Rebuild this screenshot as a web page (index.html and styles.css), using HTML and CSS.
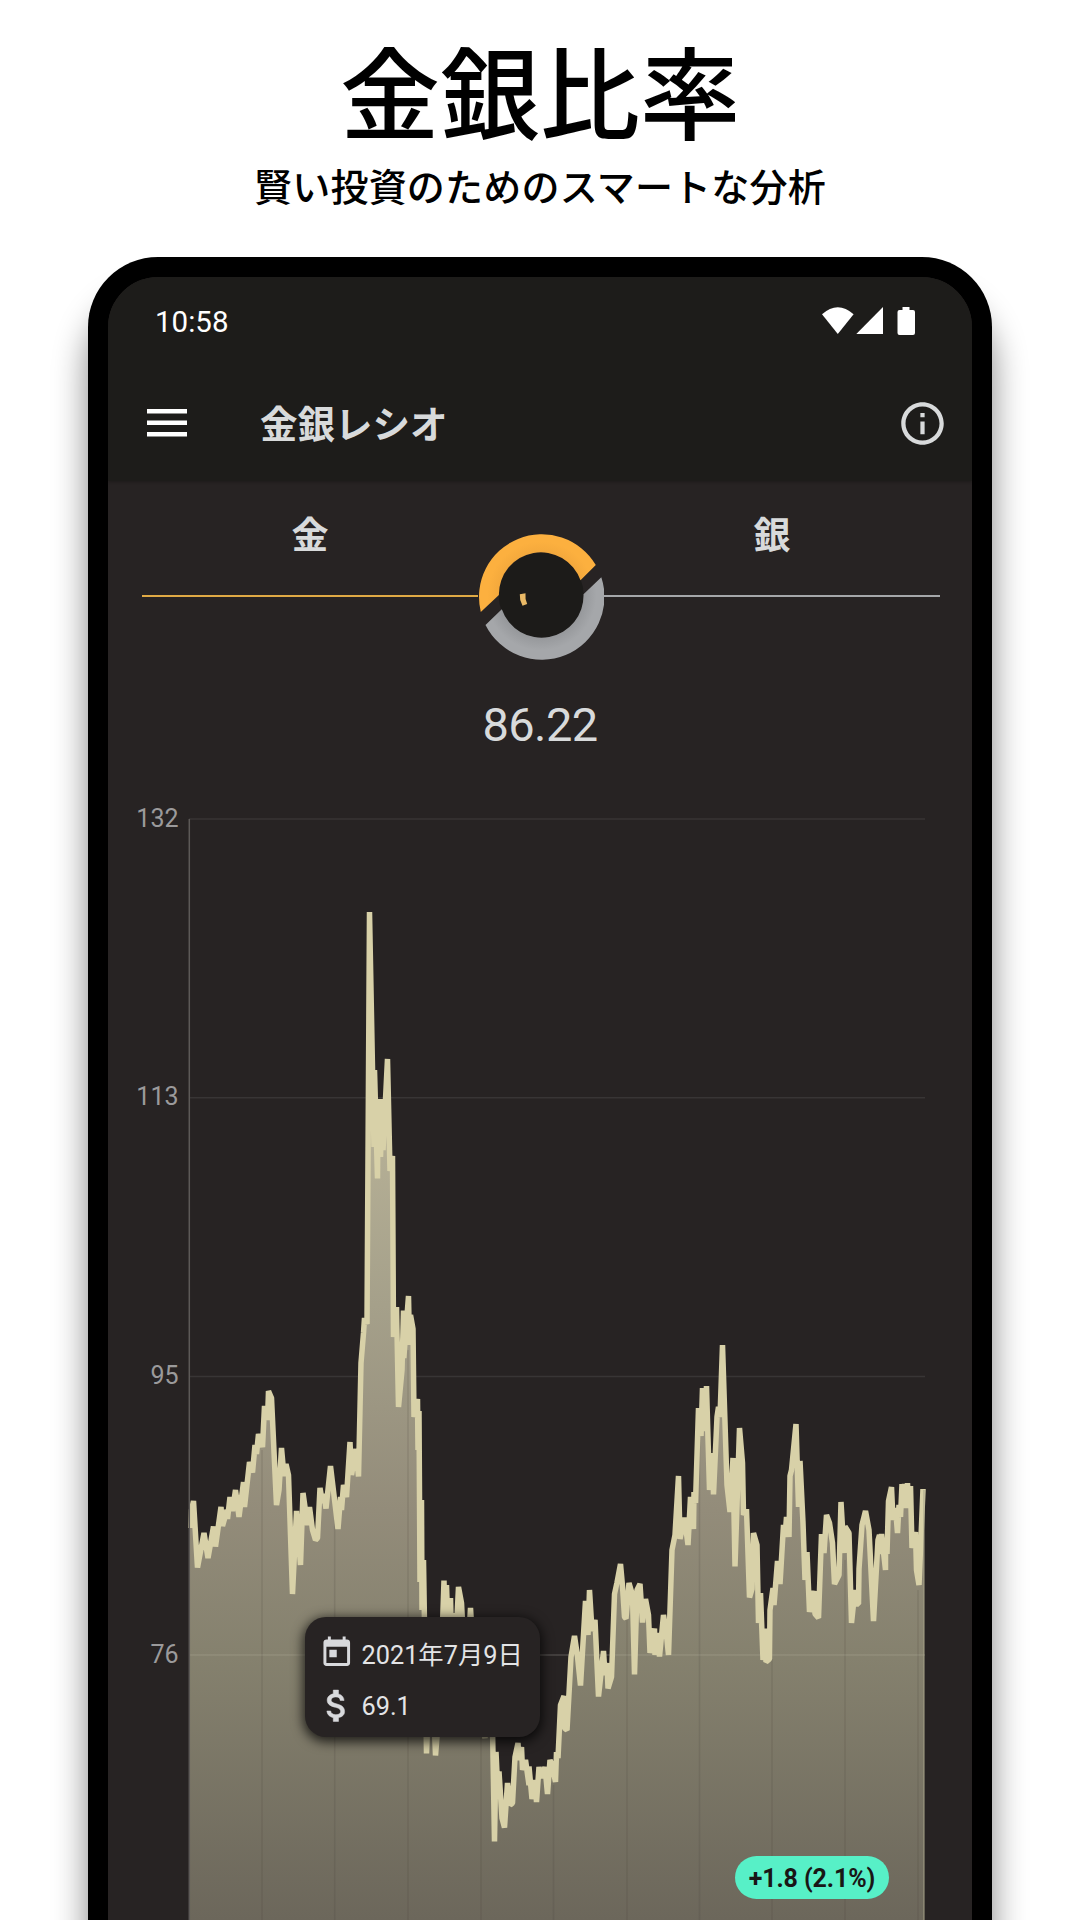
FILE: index.html
```html
<!DOCTYPE html>
<html lang="ja">
<head>
<meta charset="utf-8">
<title>金銀比率</title>
<link rel="stylesheet" href="styles.css">
</head>
<body>
<main class="page">
  <header class="promo">
    <h1 class="promo-title">金銀比率</h1>
    <p class="promo-subtitle">賢い投資のためのスマートな分析</p>
  </header>
  <section class="phone">
    <div class="screen">
      <div class="top">
        <div class="status">
          <span class="time">10:58</span>
          <svg class="status-icons" viewBox="0 0 94 29" aria-hidden="true">
            <path d="M0 7.3Q15.8-6.8 31.6 7.3L15.8 27Z"/>
            <path d="M34.3 27L61 0V27Z"/>
            <path d="M80.500 0h7v3h3.500q2 0 2 2v21q0 2-2 2h-13.500q-2 0-2-2v-21q0-2 2-2h3z"/>
          </svg>
        </div>
        <div class="toolbar">
          <svg class="menu" viewBox="0 0 40 28"><path d="M0 0h40v4.500H0zM0 11.500h40v4.500H0zM0 23h40v4.500H0z"/></svg>
          <h2 class="toolbar-title">金銀レシオ</h2>
          <svg class="info" viewBox="0 0 24 24"><path d="M11 7h2v2h-2zm0 4h2v6h-2zm1-9C6.480 2 2 6.480 2 12s4.480 10 10 10 10-4.480 10-10S17.520 2 12 2zm0 18c-4.410 0-8-3.590-8-8s3.590-8 8-8 8 3.590 8 8-3.590 8-8 8z"/></svg>
        </div>
      </div>
      <div class="pair">
        <div class="metal gold">金</div>
        <svg class="ring" viewBox="477.500 532 126 128">
          <defs>
            <radialGradient id="g1" gradientUnits="userSpaceOnUse" cx="540.500" cy="595" r="63"><stop offset=".66" stop-color="#f3a83c"/><stop offset=".85" stop-color="#fcb03f"/></radialGradient>
            <radialGradient id="g2" gradientUnits="userSpaceOnUse" cx="540.500" cy="595" r="63"><stop offset=".66" stop-color="#95979a"/><stop offset=".88" stop-color="#a5a7aa"/></radialGradient>
          </defs>
          <circle cx="540.700" cy="595.300" r="42.500" fill="#1c1b19"/>
          <path fill="url(#g1)" d="M480.300 612A62.800 62.800 0 0 1 595.300 565L580 580.300A42 42 0 0 0 498.400 595Z"/>
          <path fill="url(#g2)" d="M600.800 577.200A62.800 62.800 0 0 1 485 625L501.300 609.300A42 42 0 0 0 583 594.300Z"/>
          <path fill="#e9b966" d="M519.300 594.300l5.700-1q-.7 5.700 1.700 10.700l-4.700 1.700q-3.200-5.700-2.700-11.400z"/>
        </svg>
        <div class="metal silver">銀</div>
      </div>
      <div class="ratio">86.22</div>
      <div class="chart">
        <svg class="plot" viewBox="108 780 864 1140">
          <defs>
            <linearGradient id="area" gradientUnits="userSpaceOnUse" x1="0" y1="1100" x2="0" y2="1920">
              <stop offset="0" stop-color="#b9b398"/><stop offset=".25" stop-color="#a5a08a"/><stop offset=".5" stop-color="#938c7a"/><stop offset=".68" stop-color="#85816e"/><stop offset="1" stop-color="#6c675b"/>
            </linearGradient>
          </defs>
          <path class="grid" d="M189 819H925M189 1097.800H925M189 1376.500H925M189 1655H925"/>
          <path class="fill" id="fill"/>
          <path class="months" d="M262 1450V1920M334.700 1520V1920M408 1350V1920M481 1738V1920M553.500 1785V1920M627 1620V1920M699.500 1440V1920M772 1600V1920M845 1560V1920M918 1590V1920"/>
          <path class="grid soft" d="M189 1655H925"/>
          <path class="line" id="line"/>
          <path class="axis" d="M189.300 819V1920"/>
          <path class="end" d="M924 1490V1920"/>
          <g class="ticks">
            <text x="178.500" y="826.500">132</text>
            <text x="178.500" y="1105">113</text>
            <text x="178.500" y="1384">95</text>
            <text x="178.500" y="1662.500">76</text>
          </g>
        </svg>
        <div class="tooltip">
          <div class="tip-row">
            <svg class="tip-icon" viewBox="0 0 24 24"><path d="M19 3h-1V1h-2v2H8V1H6v2H5c-1.110 0-1.990.9-1.990 2L3 19c0 1.100.89 2 2 2h14c1.100 0 2-.9 2-2V5c0-1.100-.9-2-2-2zm0 16H5V8h14v11zM7 10h5v5H7z"/></svg>
            <span>2021年7月9日</span>
          </div>
          <div class="tip-row">
            <svg class="tip-icon dollar" viewBox="1.800 1.800 20.400 20.400"><path d="M11.800 10.900c-2.270-.59-3-1.200-3-2.150 0-1.090 1.010-1.850 2.700-1.850 1.780 0 2.440.85 2.500 2.100h2.210c-.07-1.720-1.120-3.300-3.210-3.810V3h-3v2.160c-1.940.42-3.500 1.680-3.500 3.610 0 2.310 1.910 3.460 4.700 4.130 2.500.6 3 1.480 3 2.410 0 .69-.49 1.790-2.700 1.790-2.060 0-2.870-.92-2.980-2.100h-2.200c.12 2.190 1.760 3.420 3.680 3.830V21h3v-2.150c1.950-.37 3.500-1.500 3.500-3.550 0-2.840-2.430-3.810-4.700-4.400z"/></svg>
            <span>69.1</span>
          </div>
        </div>
        <div class="badge">+1.8 (2.1%)</div>
      </div>
    </div>
  </section>
</main>
<script src="chart.js"></script>
</body>
</html>
```
FILE: styles.css
```css
* { box-sizing: border-box; }
body { margin: 0; background: #fff; font-family: Roboto, "Noto Sans CJK JP", sans-serif; }
h1, h2, p { margin: 0; }
svg { display: block; }
.page { height: 1920px; overflow: hidden; display: flex; flex-direction: column; align-items: center; }
.promo { height: 257px; flex: none; padding-top: 39px; display: flex; flex-direction: column; align-items: center; color: #000; font-family: "Noto Sans CJK JP", sans-serif; }
.promo-title { font-size: 100px; font-weight: 500; line-height: 100px; }
.promo-subtitle { font-size: 38px; font-weight: 500; line-height: 50px; margin-top: 21px; letter-spacing: .2px; white-space: nowrap; }
.phone { width: 904px; height: 1760px; flex: none; padding: 20px 20px 0; background: #000; border-radius: 70px 70px 0 0; box-shadow: 0 40px 34px rgba(0, 0, 0, .48); }
.screen { height: 1740px; border-radius: 50px 50px 0 0; background: #272323; overflow: hidden; }
.top { height: 204px; background: #1d1c1a; box-shadow: 0 1px 3px rgba(0, 0, 0, .25); }
.status { height: 90px; padding: 0 56px 0 47px; display: flex; align-items: center; justify-content: space-between; }
.time { color: #fff; font-size: 29.500px; line-height: 90px; }
.status-icons { width: 94px; height: 29px; fill: #fff; margin-top: -1px; }
.toolbar { height: 112px; padding: 0 24px 0 39px; display: flex; align-items: center; }
.menu { width: 40px; height: 28px; fill: #fff; margin-top: -1px; }
.toolbar-title { flex: 1; margin: 4px 0 0 73px; font-size: 37.500px; line-height: 50px; font-weight: 700; color: #d8dadb; }
.info { width: 51px; height: 51px; fill: #d8dadb; }
.pair { height: 179px; padding: 51px 32px 0 34px; display: grid; grid-template-columns: 336px 126px 1fr; }
.metal { height: 91px; margin-top: -26px; padding-top: 4px; font-size: 37px; line-height: 54px; font-weight: 700; text-align: center; color: #d8dadb; border-bottom: 2px solid; }
.gold { border-color: #e0aa45; }
.silver { border-color: #a5a7aa; }
.ring { width: 126px; height: 128px; }
.ratio { height: 120px; line-height: 130px; font-size: 47px; letter-spacing: -.6px; text-align: center; color: #d8dadb; }
.chart { position: relative; height: 1140px; }
.plot { width: 864px; height: 1140px; }
.grid { stroke: #383535; stroke-width: 1.500px; fill: none; }
.soft { stroke: rgba(255, 255, 235, .1); }
.fill { fill: url(#area); }
.months { stroke: rgba(70, 65, 55, .16); stroke-width: 1.500px; }
.line { fill: none; stroke: #d8d1a8; stroke-width: 5.500px; stroke-linejoin: bevel; }
.axis { stroke: #5c5957; stroke-width: 1.500px; }
.end { stroke: #a7a389; stroke-width: 1px; }
.ticks text { font: 25px Roboto, sans-serif; fill: #9b9a9b; text-anchor: end; }
.tooltip { position: absolute; left: 197px; top: 837px; width: 235px; height: 120px; border-radius: 21px; padding: 14px 13px 14px 14px; background: #272323; box-shadow: 0 3px 12px 2px rgba(0, 0, 0, .75); color: #e3e4e6; }
.tip-row { height: 44px; display: flex; align-items: center; gap: 7px; font-size: 25.300px; white-space: nowrap; }
.tip-row + .tip-row { margin-top: 9px; }
.tip-icon { width: 35.500px; height: 35.500px; fill: #d8d9dc; }
.dollar { stroke: #d8d9dc; stroke-width: .3px; }
.badge { position: absolute; left: 627px; top: 1076px; width: 154px; height: 43px; border-radius: 22px; background: #57f0c7; color: #191616; font-size: 25px; font-weight: 700; line-height: 45px; letter-spacing: -.1px; text-align: center; white-space: nowrap; }
```
FILE: chart.js
```js
// Ratio history as plot coordinates: x y pairs, oldest first.
const series = `
191 1528 191.5 1510 193.5 1501 197.500 1567.500 204 1533 208 1558 213.500 1526.500 215.500 1546.500 221 1507 222.500 1526 227 1510 227.5 1519 230 1497 232.500 1511
235.500 1490 239 1517 243.500 1482 244.500 1507 249.500 1462 252.500 1472.500 255 1445 256.500 1454 258.500 1434 262.500 1447 264.500 1406
267.500 1420 268.500 1391 271.500 1398 276.500 1505 279 1490 281.500 1448 284 1476 286 1464 288.500 1475 290.500 1535 292.500 1594 296.500 1511
300.500 1565 303 1493 307.500 1525 309.500 1507 312.500 1530 315.500 1540 317.500 1538 320 1488 322.500 1503 324 1494 326 1508.500 330.500 1466
333.500 1491 338 1529 340.500 1497 341.500 1510 343.500 1485 346.500 1497 350 1442 351.500 1475 356 1449 358.500 1476.500 361 1363 363.500 1333 364.500 1318 367 1324
369.500 912 374 1147 374.500 1070 377.500 1178.500 378 1099 380.500 1157 382.500 1099 383 1150 387.500 1059 390 1171 392.500 1156 393.500 1337 396.500 1307
398.500 1407 402 1370 403.500 1310.500 403.8 1358 408.500 1296 409.500 1345 410.500 1315 413 1329 414 1417 417.500 1399 418 1450 419 1411
420 1582 421.500 1500 422 1610 423.500 1560 426.500 1753.500 431 1640 435.500 1755.500 440 1700 444 1580.500 445.500 1660 446.500 1585 449 1660 450.500 1598 452 1660 453.500 1613
455 1660 458.500 1587 461.500 1603 466 1690 470.500 1608 476 1700 485 1738 491 1640 494.500 1841.500 496 1752 498 1795 499 1771.500
502 1818 504.500 1827.500 507.500 1783 510 1805 512.500 1803 515 1757 518 1743 519 1760 521.500 1747 522.500 1770 525.500 1760 529 1785 529 1766.500 532 1799
535 1780 536.500 1802 539 1767 541.500 1778 545 1767 547.500 1794 550 1760 552 1765 555.500 1782 556.500 1752 558 1758 560.500 1705 564 1696 564.5 1728 567 1730
571 1657 574.500 1636 577.500 1656.500 580.500 1685.500 585.500 1601 588 1635 589.500 1590 592 1631 595 1620 598.500 1696.500 603.500 1651 605 1675 607 1663
608 1688.500 611.500 1677 614.500 1594 617 1582.500 620.500 1564 622.500 1586 624.5 1617 626 1618.500 629 1583 632.500 1595 634.500 1674.500 637 1590 640 1584
642.500 1622.500 645.500 1599 648.500 1615 650 1653 654.500 1628.500 655 1655 657 1633 659.500 1656.500 663.500 1615 666.500 1635 668.500 1655
672 1550 675 1535 678.500 1476 680 1539 684.500 1517.500 688 1545 690.500 1497 693.500 1529 694 1492 695.500 1503 698.500 1408 701 1436
702.500 1388 704.500 1431 706.500 1386 709.500 1490 712.500 1453 713.500 1494.500 717 1417 718.500 1407 720 1417 722.500 1345 727 1485 730 1512
733 1458 735 1566.500 739.500 1428 742.500 1463 743.500 1515 746.500 1509 749.500 1597.500 752 1589 753.500 1533 757 1545 758.500 1623 760.500 1593
763 1660 765.500 1628.500 766 1662 769.5 1659 770 1610 773 1588 774 1605 777.500 1561 780 1584 783.500 1525 785 1537 786.500 1517 789 1537
790 1476 791.500 1470 796 1424 798.500 1507 800 1461 803 1523 805 1580 807 1552 809.500 1612 812 1599 814 1591 815 1614 818.500 1618
821.500 1534 824 1553 826.500 1515 829.500 1523 832.500 1543 834.500 1584 839 1575 841 1502 844 1553 845 1526.500 849 1533 851.500 1623
855 1590 856 1604 858.500 1604 859 1569 862 1525 865.500 1511 869 1530 873.500 1621 878 1540 879.500 1535 880.500 1554 881.500 1534 885.500 1570 885.500 1544
887 1554 888.500 1501 891.500 1487 893 1520 895.500 1508 897.500 1533 899 1505 900.500 1517 902 1484 903 1508 904.500 1484 906.500 1508 907.500 1483 908.5 1508 910.500 1486
912 1548 915.500 1532 916.5 1570 919 1585 923 1489`.trim().split(/\s+/);

const points = [];
for (let i = 0; i < series.length; i += 2) points.push(`${series[i]} ${series[i + 1]}`);
const d = 'M' + points.join('L');
document.getElementById('line').setAttribute('d', d);
document.getElementById('fill').setAttribute('d', d + 'L924 1489V1920H189V1528Z');
```
